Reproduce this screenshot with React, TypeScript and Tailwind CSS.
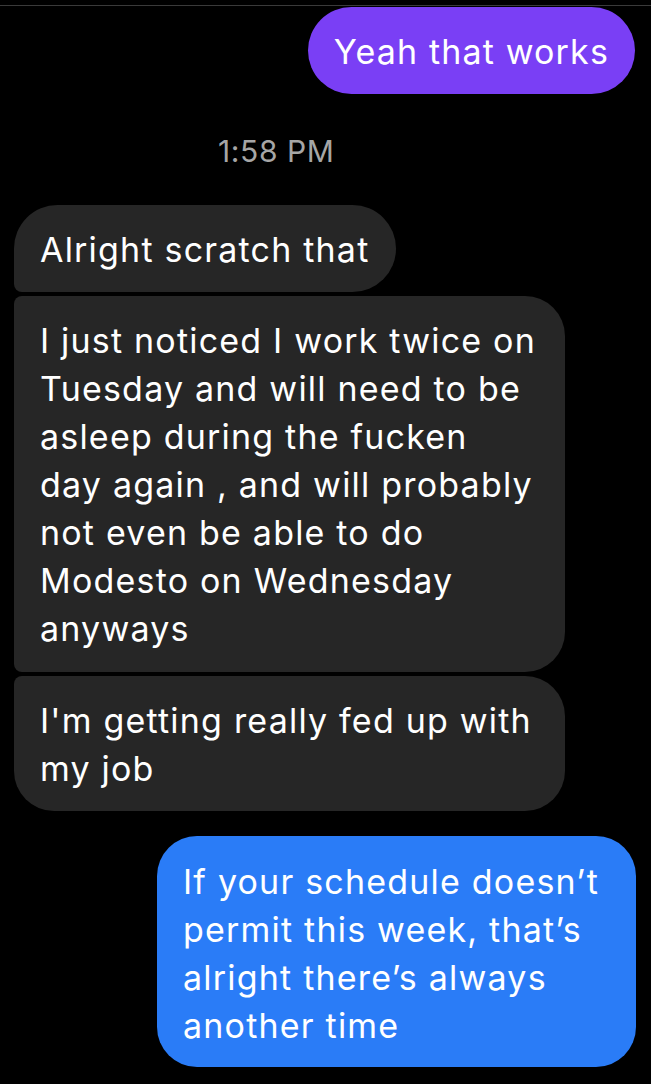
import React from "react";

const font = { fontFamily: "Inter, 'Noto Sans', sans-serif" };

export default function App() {
  return (
    <div
      className="w-[651px] h-[1084px] bg-black overflow-hidden flex flex-col antialiased"
      style={font}
    >
      <div className="h-px bg-[#3a3a3a] mt-[5px] w-full" />
      <div className="self-end mr-[16px] mt-[1px] bg-[#7a3ff5] text-white rounded-[44px] px-[26px] pt-[21px] pb-[18px] text-[34px] leading-[48px] tracking-[1.15px] whitespace-nowrap">
        Yeah that works
      </div>
      <div className="pl-[218px] mt-[42px] h-[30px] text-[30px] leading-[30px] tracking-[0.6px] text-[#a6a6a6] whitespace-nowrap">
        1:58 PM
      </div>
      <div className="flex flex-col gap-[4px] mt-[39px] pl-[14px] items-start">
        <div className="bg-[#262626] text-white rounded-[44px] rounded-bl-[8px] px-[26px] pt-[21px] pb-[18px] text-[34px] leading-[48px] tracking-[1.2px] whitespace-nowrap">
          Alright scratch that
        </div>
        <div className="w-[551px] bg-[#262626] text-white rounded-[40px] rounded-tl-[8px] rounded-bl-[8px] px-[26px] pt-[21px] pb-[19px] text-[34px] leading-[48px] tracking-[1.2px] whitespace-nowrap">
          I just noticed I work twice on
          <br />
          Tuesday and will need to be
          <br />
          asleep during the fucken
          <br />
          day again , and will probably
          <br />
          not even be able to do
          <br />
          Modesto on Wednesday
          <br />
          anyways
        </div>
        <div className="w-[551px] bg-[#262626] text-white rounded-[40px] rounded-tl-[8px] px-[26px] pt-[21px] pb-[18px] text-[34px] leading-[48px] tracking-[1.2px] whitespace-nowrap">
          I'm getting really fed up with
          <br />
          my job
        </div>
      </div>
      <div className="self-end mr-[15px] mt-[25px] w-[479px] bg-[#2a7cf7] text-white rounded-[40px] px-[26px] pt-[22px] pb-[17px] text-[34px] leading-[48px] tracking-[1.2px] whitespace-nowrap">
        If your schedule doesn’t
        <br />
        permit this week, that’s
        <br />
        alright there’s always
        <br />
        another time
      </div>
    </div>
  );
}
